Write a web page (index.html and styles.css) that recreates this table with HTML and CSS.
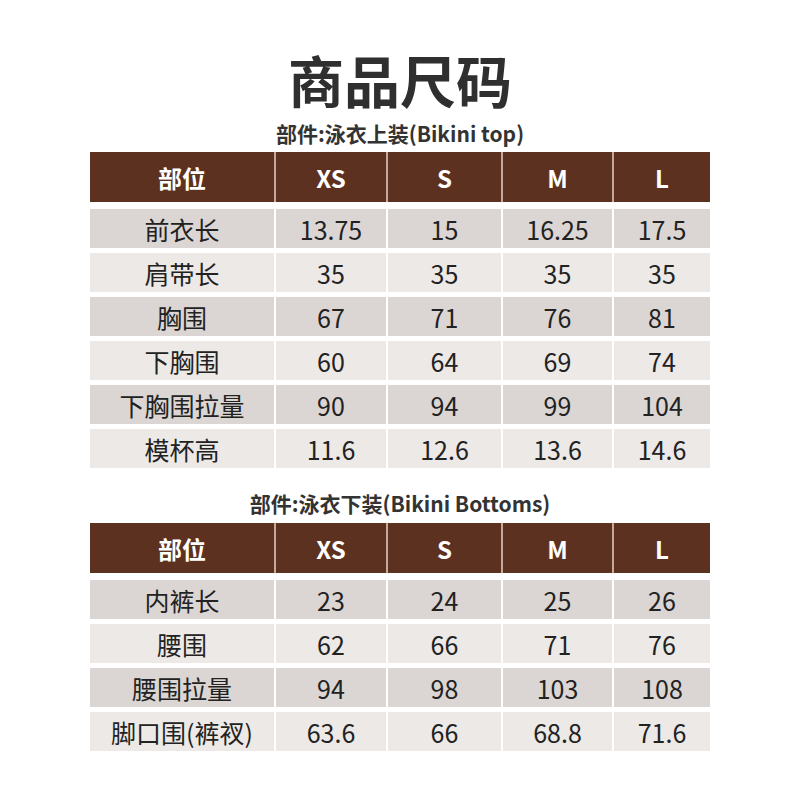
FILE: index.html
```html
<!DOCTYPE html>
<html lang="zh">
<head>
<meta charset="utf-8">
<title>商品尺码</title>
<link rel="stylesheet" href="styles.css">
</head>
<body>
<main class="page">
  <h1 class="title">商品尺码</h1>

  <section class="section first">
    <h2 class="subtitle">部件:泳衣上装(Bikini top)</h2>
    <div class="table">
      <div class="row head"><div>部位</div><div>XS</div><div>S</div><div>M</div><div>L</div></div>
      <div class="row dark"><div>前衣长</div><div>13.75</div><div>15</div><div>16.25</div><div>17.5</div></div>
      <div class="row light"><div>肩带长</div><div>35</div><div>35</div><div>35</div><div>35</div></div>
      <div class="row dark"><div>胸围</div><div>67</div><div>71</div><div>76</div><div>81</div></div>
      <div class="row light"><div>下胸围</div><div>60</div><div>64</div><div>69</div><div>74</div></div>
      <div class="row dark"><div>下胸围拉量</div><div>90</div><div>94</div><div>99</div><div>104</div></div>
      <div class="row light"><div>模杯高</div><div>11.6</div><div>12.6</div><div>13.6</div><div>14.6</div></div>
    </div>
  </section>

  <section class="section second">
    <h2 class="subtitle">部件:泳衣下装(Bikini Bottoms)</h2>
    <div class="table">
      <div class="row head"><div>部位</div><div>XS</div><div>S</div><div>M</div><div>L</div></div>
      <div class="row dark"><div>内裤长</div><div>23</div><div>24</div><div>25</div><div>26</div></div>
      <div class="row light"><div>腰围</div><div>62</div><div>66</div><div>71</div><div>76</div></div>
      <div class="row dark"><div>腰围拉量</div><div>94</div><div>98</div><div>103</div><div>108</div></div>
      <div class="row light"><div>脚口围(裤衩)</div><div>63.6</div><div>66</div><div>68.8</div><div>71.6</div></div>
    </div>
  </section>
</main>
</body>
</html>
```
FILE: styles.css
```css
* { box-sizing: border-box; }
html, body {
  margin: 0;
  padding: 0;
  background: #ffffff;
}
body {
  font-family: "Noto Sans CJK SC", "Noto Sans", sans-serif;
  color: #222;
}
.page {
  width: 800px;
  height: 800px;
  padding: 47px 90px 0 90px;
  display: flex;
  flex-direction: column;
}
.title {
  margin: 0;
  font-size: 56px;
  line-height: 64px;
  height: 64px;
  font-weight: 700;
  color: #2f2f2f;
  text-align: center;
}
.section {
  display: flex;
  flex-direction: column;
}
.section.first { margin-top: 8px; }
.section.second { margin-top: 21px; }
.subtitle {
  margin: 0 0 5px 0;
  font-size: 21px;
  line-height: 28px;
  height: 28px;
  font-weight: 700;
  color: #333;
  text-align: center;
}
.second .subtitle { margin-bottom: 6px; }
.table {
  display: flex;
  flex-direction: column;
  gap: 5px;
}
.row {
  display: grid;
  grid-template-columns: 184px 110px 113px 109px 96px;
  column-gap: 2px;
  height: 39px;
}
.row > div {
  display: flex;
  align-items: center;
  justify-content: center;
  font-size: 25px;
  color: #222;
}
.row.head {
  height: 50px;
  margin-bottom: 2px;
  background: #c4a89b;
}
.row.head > div {
  background: #5d3120;
  color: #ffffff;
  font-weight: 700;
  font-size: 24px;
}
.row.dark > div { background: #dbd6d3; }
.row.light > div { background: #ece9e7; }
```
